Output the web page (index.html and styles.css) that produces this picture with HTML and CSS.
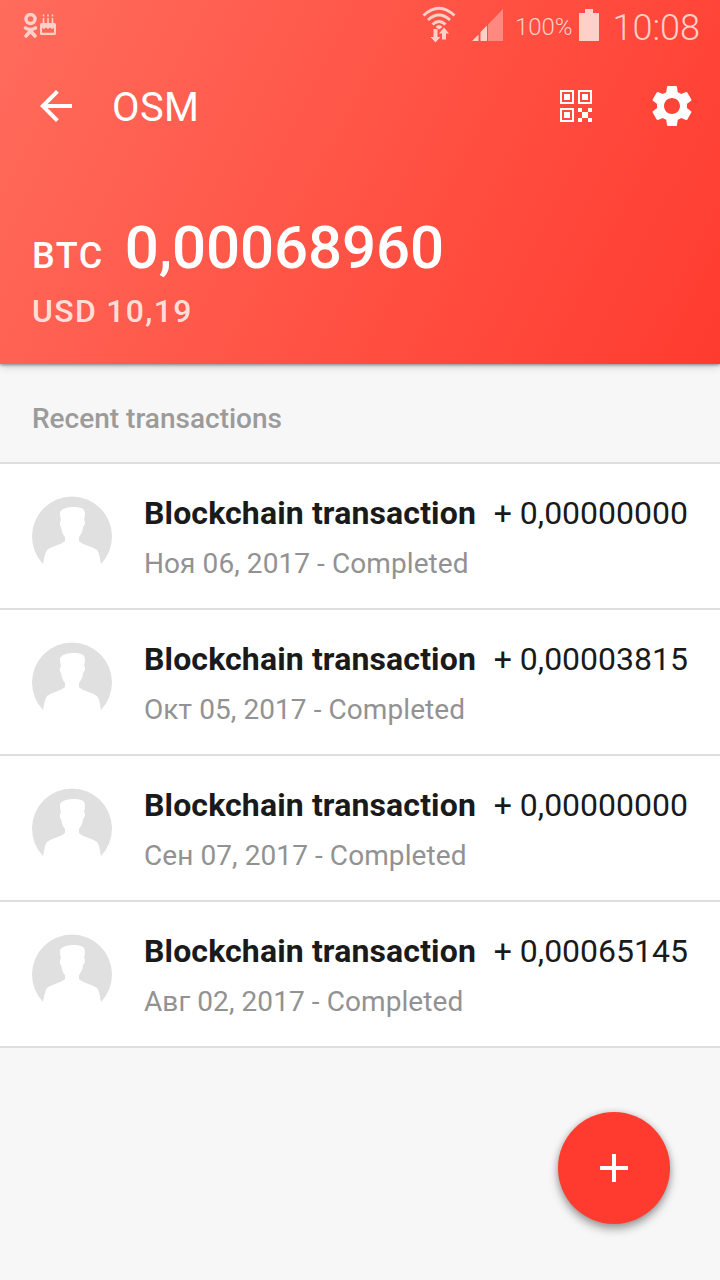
FILE: index.html
```
<!DOCTYPE html>
<html lang="en">
<head>
    <meta charset="UTF-8">
    <title>OSM wallet</title>
    <link rel="stylesheet" href="styles.css">
</head>
<body>
<svg class="sprite">
    <symbol id="avatar" viewBox="0 0 80 80">
        <path d="M11 68A40 40 0 1 1 69 68C68 62 67 56 65 54C60 50 50 49 47 45V41C49 38 51 35 51 31C54 28 53 25 52 24C54 17 53 13 49 12C43 10 33 11 30 14C27 15 28 20 29 24C27 27 28 30 29 31C30 36 31 39 33 41V45C29 49 20 50 15 54C13 57 12 62 11 68Z"/>
    </symbol>
</svg>

<div class="header">
    <div class="status">
        <svg class="status-notify" width="34" height="28" viewBox="0 0 34 28">
            <circle cx="7.5" cy="7" r="4.5" fill="none" stroke="currentColor" stroke-width="3.4"/>
            <path d="M2.500 16Q7.500 19 12.500 16M3 24L7.500 19L12 24" fill="none" stroke="currentColor" stroke-width="3.6" stroke-linecap="round"/>
            <path d="M20.500 6V11M25 6V11M29.500 6V11" stroke="currentColor" stroke-width="1.6"/>
            <path d="M19.700 2.500H21.300V4.500H19.700ZM24.200 2.500H25.800V4.500H24.200ZM28.700 2.500H30.300V4.500H28.700Z" fill="currentColor"/>
            <path fill="currentColor" fill-rule="evenodd" d="M18.500 11H31.500Q33 11 33 12.500V21.500Q33 23 31.500 23H18.500Q17 23 17 21.500V12.500Q17 11 18.500 11ZM19 16V20.800H31V16L29 17L27 15.500L25 17L23 15.500L21 17Z"/>
        </svg>
        <svg class="status-wifi" width="34" height="36" viewBox="0 0 34 36">
            <path d="M1.500 9.500Q17 -5 32.500 9.500M6 14Q17 4 28 14M10.500 18.500Q17 12.500 23.500 18.500" fill="none" stroke="currentColor" stroke-width="3"/>
            <path fill="currentColor" d="M13.500 21Q17 17 20.500 21L17 23.500ZM11.500 23H15.500V31H18.500L13.500 36.500L8.500 31H11.500ZM20 33.500H24V27.500H27L22 21.500L17 27.500H20Z"/>
        </svg>
        <svg class="status-signal" width="31" height="32" viewBox="0 0 31 32" fill="currentColor">
            <path d="M0 32L6.500 25.500V32ZM8.500 23L15 16.500V32H8.500Z"/>
            <path opacity=".45" d="M16 15.500L31 0V32H16Z"/>
        </svg>
        <span class="status-percent">100%</span>
        <svg class="status-battery" width="20" height="32" viewBox="0 0 20 32" fill="currentColor">
            <path d="M6 0H14V4H20V32H0V4H6Z"/>
        </svg>
        <span class="status-time">10:08</span>
    </div>

    <div class="toolbar">
        <svg class="icon" viewBox="0 0 24 24"><path d="M20 11H7.830l5.590-5.590L12 4l-8 8 8 8 1.410-1.410L7.830 13H20v-2z"/></svg>
        <div class="toolbar-title">OSM</div>
        <svg class="icon icon-qr" viewBox="0 0 48 48">
            <path fill-rule="evenodd" d="M8 8H22V22H8ZM10 10V20H20V10ZM26 8H40V22H26ZM28 10V20H38V10ZM8 26H22V40H8ZM10 28V38H20V28Z"/>
            <path d="M12 12H18V18H12ZM30 12H36V18H30ZM12 30H18V36H12ZM26 26H30V30H26ZM36 26H40V30H36ZM30 30H36V36H30ZM26 36H30V40H26ZM36 36H40V40H36Z"/>
        </svg>
        <svg class="icon" viewBox="0 0 24 24"><path d="M19.430 12.980c.04-.32.07-.64.07-.98s-.03-.66-.07-.98l2.110-1.650c.19-.15.24-.42.12-.64l-2-3.460c-.12-.22-.39-.3-.61-.22l-2.490 1c-.52-.4-1.080-.73-1.690-.98l-.38-2.650C14.460 2.180 14.250 2 14 2h-4c-.25 0-.46.18-.49.42l-.38 2.650c-.61.25-1.170.59-1.690.98l-2.490-1c-.23-.09-.49 0-.61.22l-2 3.460c-.13.22-.07.49.12.64l2.110 1.650c-.04.32-.07.65-.07.98s.03.66.07.98l-2.110 1.650c-.19.15-.24.42-.12.64l2 3.460c.12.22.39.3.61.22l2.490-1c.52.4 1.080.73 1.690.98l.38 2.650c.03.24.24.42.49.42h4c.25 0 .46-.18.49-.42l.38-2.650c.61-.25 1.170-.59 1.690-.98l2.490 1c.23.09.49 0 .61-.22l2-3.460c.12-.22.07-.49-.12-.64l-2.110-1.650zM12 16c-2.210 0-4-1.790-4-4s1.790-4 4-4 4 1.790 4 4-1.790 4-4 4z"/></svg>
    </div>

    <div class="balance">
        <div class="balance-main">
            <span class="balance-code">BTC</span>
            <span class="balance-value">0,00068960</span>
        </div>
        <div class="balance-usd">USD 10,19</div>
    </div>
</div>

<div class="list-title">Recent transactions</div>

<div class="list">
    <div class="item">
        <svg class="avatar"><use href="#avatar"/></svg>
        <div class="item-body">
            <div class="item-top">
                <span class="item-name">Blockchain transaction</span>
                <span class="item-sum">+ 0,00000000</span>
            </div>
            <div class="item-date">Ноя 06, 2017 - Completed</div>
        </div>
    </div>
    <div class="item">
        <svg class="avatar"><use href="#avatar"/></svg>
        <div class="item-body">
            <div class="item-top">
                <span class="item-name">Blockchain transaction</span>
                <span class="item-sum">+ 0,00003815</span>
            </div>
            <div class="item-date">Окт 05, 2017 - Completed</div>
        </div>
    </div>
    <div class="item">
        <svg class="avatar"><use href="#avatar"/></svg>
        <div class="item-body">
            <div class="item-top">
                <span class="item-name">Blockchain transaction</span>
                <span class="item-sum">+ 0,00000000</span>
            </div>
            <div class="item-date">Сен 07, 2017 - Completed</div>
        </div>
    </div>
    <div class="item">
        <svg class="avatar"><use href="#avatar"/></svg>
        <div class="item-body">
            <div class="item-top">
                <span class="item-name">Blockchain transaction</span>
                <span class="item-sum">+ 0,00065145</span>
            </div>
            <div class="item-date">Авг 02, 2017 - Completed</div>
        </div>
    </div>
</div>

<button class="fab">
    <svg class="icon" viewBox="0 0 24 24"><path d="M19 13h-6v6h-2v-6H5v-2h6V5h2v6h6v2z"/></svg>
</button>
</body>
</html>
```
FILE: styles.css
```
* {
    box-sizing: border-box;
}
body {
    position: relative;
    margin: 0;
    width: 720px;
    height: 1280px;
    overflow: hidden;
    background-color: #f7f7f7;
    font-family: Roboto, "Noto Sans", sans-serif;
    white-space: nowrap;
}
.sprite {
    display: none;
}

.header {
    position: relative;
    height: 364px;
    color: #fff;
    background: linear-gradient(117deg, #ff6c5c 0%, #ff3b2f 100%);
    box-shadow: 0 1px 3px rgba(0, 0, 0, .4), 0 3px 8px rgba(0, 0, 0, .15);
}
.status {
    display: flex;
    align-items: flex-start;
    height: 50px;
    padding: 0 20px 0 23px;
    color: #ffcfc9;
}
.status-notify {
    margin: 12px auto 0 0;
}
.status-wifi {
    margin: 6px 16px 0 0;
    overflow: visible;
}
.status-signal {
    margin: 9px 12px 0 0;
}
.status-percent {
    margin-right: 6px;
    font-size: 24px;
    font-weight: 300;
    line-height: 54px;
}
.status-battery {
    margin: 9px 14px 0 0;
}
.status-time {
    font-size: 36px;
    font-weight: 300;
    line-height: 56px;
}

.toolbar {
    display: flex;
    align-items: center;
    height: 112px;
    padding: 0 24px 0 32px;
}
.icon {
    width: 48px;
    height: 48px;
    fill: #fff;
}
.icon-qr {
    margin-right: 48px;
}
.toolbar-title {
    flex: 1;
    padding: 2px 0 0 32px;
    font-size: 40px;
    letter-spacing: .4px;
}

.balance {
    padding: 51px 32px 0;
    font-weight: 500;
}
.balance-main {
    display: flex;
    align-items: baseline;
    line-height: 70px;
}
.balance-code {
    margin-right: 21px;
    font-size: 36px;
    letter-spacing: 1.5px;
}
.balance-value {
    font-size: 60px;
    letter-spacing: -.1px;
}
.balance-usd {
    margin-top: 1px;
    font-size: 32px;
    line-height: 38px;
    letter-spacing: 1.3px;
    color: #ffded9;
}

.list-title {
    height: 100px;
    padding: 6px 32px 0;
    border-bottom: 2px solid #dedede;
    font-size: 28px;
    font-weight: 500;
    line-height: 98px;
    color: #9b9b9b;
}
.item {
    display: flex;
    height: 146px;
    padding: 32px;
    border-bottom: 2px solid #dedede;
    background-color: #fff;
}
.avatar {
    width: 80px;
    height: 80px;
    margin-right: 32px;
    fill: #e0e0e0;
}
.item-body {
    flex: 1;
}
.item-top {
    display: flex;
    justify-content: space-between;
    font-size: 32px;
    line-height: 34px;
    color: #1a1a1a;
}
.item-name {
    font-weight: 700;
    letter-spacing: .13px;
}
.item-date {
    margin-top: 16px;
    font-size: 28px;
    line-height: 36px;
    letter-spacing: .08px;
    color: #929292;
}

.fab {
    display: flex;
    align-items: center;
    justify-content: center;
    position: absolute;
    right: 50px;
    bottom: 56px;
    width: 112px;
    height: 112px;
    padding: 0;
    border: 0;
    border-radius: 50%;
    background-color: #ff3b2f;
    box-shadow: 0 5px 10px rgba(0, 0, 0, .35), 0 0 6px rgba(0, 0, 0, .15);
}
```
